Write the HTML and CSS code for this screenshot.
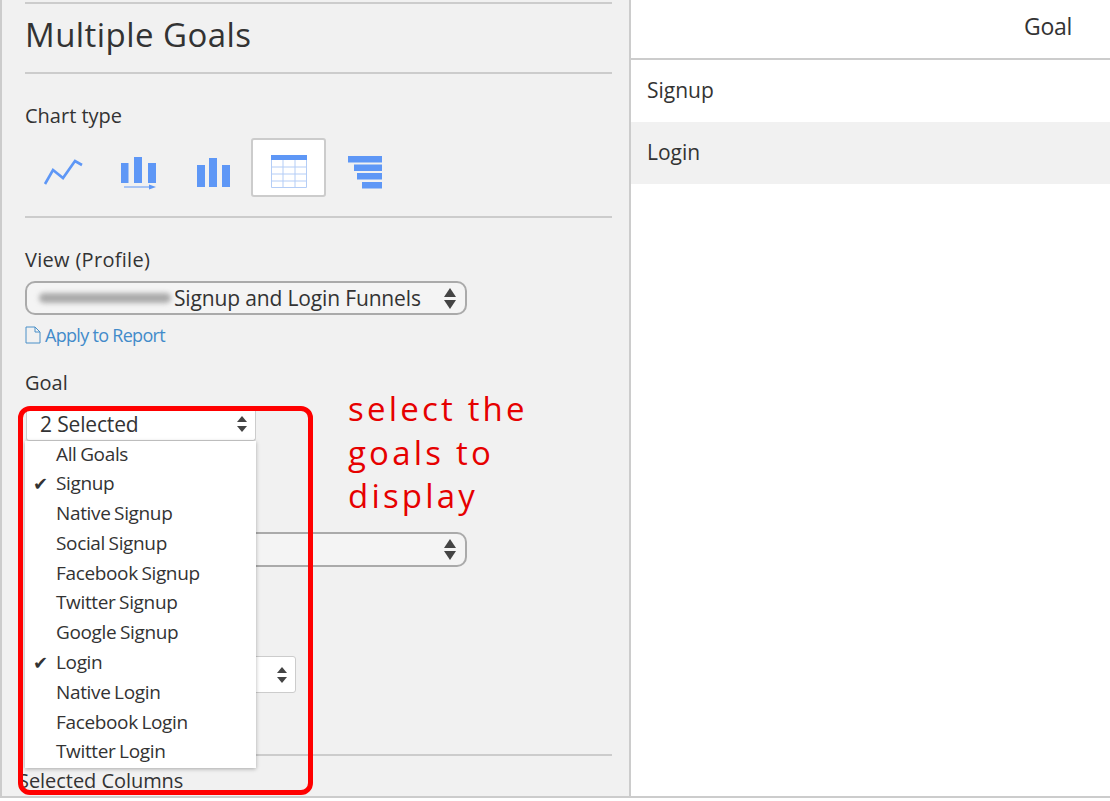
FILE: index.html
```html
<!DOCTYPE html>
<html lang="en">
<head>
<meta charset="utf-8">
<title>Multiple Goals</title>
<link rel="stylesheet" href="styles.css">
</head>
<body>
<div class="page">
  <aside class="panel">
    <section class="sec sec-title"><h1>Multiple Goals</h1></section>
    <section class="sec sec-chart">
      <div class="label">Chart type</div>
      <div class="charts">
        <span class="chart"><svg width="42" height="30" viewBox="0 0 42 30"><path d="M2 27 L10 13 L20 21 L32 4 L39 8" fill="none" stroke="#5e97f6" stroke-width="2.6"/></svg></span>
        <span class="chart"><svg width="38" height="36" viewBox="0 0 38 36"><path d="M1 9h7.500v20H1zM14 3h8v26h-8zM28 9h8v20h-8z" fill="#5e97f6"/><path d="M4 33h26" stroke="#5e97f6" stroke-width="1"/><path d="M29 30.500l7 2.500-7 2.500z" fill="#5e97f6"/></svg></span>
        <span class="chart"><svg width="38" height="36" viewBox="0 0 38 36"><path d="M2 11h8v22H2zM14 4h8v29h-8zM27 11h8v22h-8z" fill="#5e97f6"/></svg></span>
        <span class="chart active"><svg width="38" height="36" viewBox="0 0 38 36"><path d="M1 1h36v5H1z" fill="#5e97f6"/><path d="M1.500 6v27.500h35V6M1 13h36M1 20h36M1 27h36M13 6v27M25 6v27" fill="none" stroke="#b4cdf6" stroke-width="1"/></svg></span>
        <span class="chart"><svg width="38" height="36" viewBox="0 0 38 36"><path d="M1 2h34v6.500H1zM7 10.500h28V17H7zM10 19h25v6.500H10zM15 28h20v6.500H15z" fill="#5e97f6"/></svg></span>
      </div>
    </section>
    <section class="sec sec-view">
      <div class="label view-label">View (Profile)</div>
      <div class="select wide"><span class="blur"></span><span class="value">Signup and Login Funnels</span><span class="arrows big"></span></div>
      <a class="apply" href="#"><svg width="16" height="18" viewBox="0 0 16 18"><path d="M1 1h9l5 5v11H1zM10 1v5h5" fill="none" stroke="#4a90c8" stroke-width="1"/></svg>Apply to Report</a>
      <div class="label goal">Goal</div>
      <div class="select plain goal-select"><span class="value">2 Selected</span><span class="arrows"></span></div>
      <div class="select wide hidden-select"><span class="arrows big"></span></div>
      <div class="select plain small-select"><span class="arrows"></span></div>
    </section>
    <section class="sec-columns"><div class="label columns-label">Selected Columns</div></section>

    <ul class="menu">
      <li>All Goals</li>
      <li class="on">Signup</li>
      <li>Native Signup</li>
      <li>Social Signup</li>
      <li>Facebook Signup</li>
      <li>Twitter Signup</li>
      <li>Google Signup</li>
      <li class="on">Login</li>
      <li>Native Login</li>
      <li>Facebook Login</li>
      <li>Twitter Login</li>
    </ul>
    <div class="callout"></div>
    <p class="note">select the<br>goals to<br>display</p>
  </aside>
  <main class="results">
    <div class="thead">Goal</div>
    <div class="row">Signup</div>
    <div class="row alt">Login</div>
  </main>
</div>
</body>
</html>
```
FILE: styles.css
```css
* { box-sizing: border-box; }
html, body { margin: 0; height: 801px; overflow: hidden; background: #fff; }
body { font-family: "Open Sans", "Noto Sans", sans-serif; color: #333; font-size: 20px; }
.page { display: flex; height: 798px; border-bottom: 2px solid #ccc; }
.panel { position: relative; width: 631px; flex: none; background: #f1f1f1; border-left: 2px solid #ccc; border-right: 2px solid #ccc; padding: 2px 17px 0 23px; overflow: hidden; }
.sec { border-top: 2px solid #ccc; }
.sec-title { height: 70px; }
h1 { margin: 0; font-weight: 400; font-size: 33px; line-height: 40px; padding-top: 11px; letter-spacing: 0.45px; color: #333; }
.label { font-size: 20px; line-height: 28px; letter-spacing: 0; }
.view-label { letter-spacing: 0.3px; }
.columns-label { margin-left: -7px; letter-spacing: -0.05px; }
.sec-chart { height: 144px; padding-top: 28px; }
.charts { display: flex; margin: 8px 0 0 1px; }
.chart { width: 75px; height: 59px; padding-top: 9px; display: flex; align-items: center; justify-content: center; border: 2px solid transparent; border-radius: 3px; }
.chart:last-child { padding-left: 5px; }
.chart.active { background: #fff; border-color: #ccc; }
.sec-view { height: 540px; padding-top: 28px; }
.select { display: flex; align-items: center; justify-content: space-between; }
.wide { width: 442px; height: 34px; margin-top: 7px; border: 2px solid #aaa; border-radius: 10px; background: #f4f4f4; padding: 0 9px 0 12px; }
.blur { width: 132px; height: 10px; border-radius: 5px; background: #aaa; filter: blur(2.500px); }
.value { flex: 1; font-size: 21px; letter-spacing: -0.15px; padding-left: 3px; }
.arrows { display: block; width: 10px; height: 16px; flex: none; position: relative; }
.arrows::before, .arrows::after { content: ""; position: absolute; left: 0; border-left: 5px solid transparent; border-right: 5px solid transparent; }
.arrows::before { top: 0; border-bottom: 6px solid #444; }
.arrows::after { bottom: 0; border-top: 6px solid #444; }
.arrows.big { width: 12px; height: 21px; }
.arrows.big::before { border-left-width: 6px; border-right-width: 6px; border-bottom-width: 9px; }
.arrows.big::after { border-left-width: 6px; border-right-width: 6px; border-top-width: 9px; }
.apply { display: flex; align-items: center; gap: 4px; margin-top: 8px; height: 24px; color: #428bca; text-decoration: none; font-size: 18px; letter-spacing: -0.7px; }
.goal { margin-top: 22px; }
.plain { background: #fff; border: 1px solid #ccc; border-top: 0; border-radius: 3px; }
.goal-select { width: 230px; height: 33px; margin: 11px 0 0 1px; padding: 0 8px 0 10px; }
.hidden-select { margin-top: 91px; height: 35px; justify-content: flex-end; }
.small-select { width: 271px; height: 37px; margin-top: 89px; justify-content: flex-end; padding-right: 8px; border-top: 1px solid #ccc; }
.sec-columns { border-top: 2px solid #ccc; margin-top: -2px; padding-top: 11px; }
.menu { position: absolute; left: 23px; top: 441px; width: 231px; height: 327px; margin: 0; padding: 0; list-style: none; background: #fff; box-shadow: 0 1px 4px rgba(0,0,0,.3); font-size: 19px; line-height: 29.800px; letter-spacing: -0.35px; word-spacing: -1px; }
.menu li { padding-left: 31px; position: relative; white-space: nowrap; }
.menu li:first-child { margin-top: -1.500px; }
.menu li.on::before { content: "✔"; position: absolute; left: 8px; font-size: 18px; font-family: "DejaVu Sans", sans-serif; color: #333; }
.callout { position: absolute; left: 16px; top: 406px; width: 295px; height: 389px; border: 5px solid #f00; border-radius: 12px; }
.note { position: absolute; left: 346px; top: 387px; margin: 0; color: #e60000; font-size: 33px; line-height: 43.500px; letter-spacing: 3.200px; }
.results { flex: 1; min-width: 0; }
.thead { height: 60px; border-bottom: 2px solid #ccc; text-align: right; padding: 10px 38px 0 0; font-size: 23px; line-height: 32px; letter-spacing: -0.3px; }
.row { height: 62px; padding: 15px 0 0 16px; font-size: 21px; line-height: 30px; }
.row.alt { background: #f1f1f1; }
```
